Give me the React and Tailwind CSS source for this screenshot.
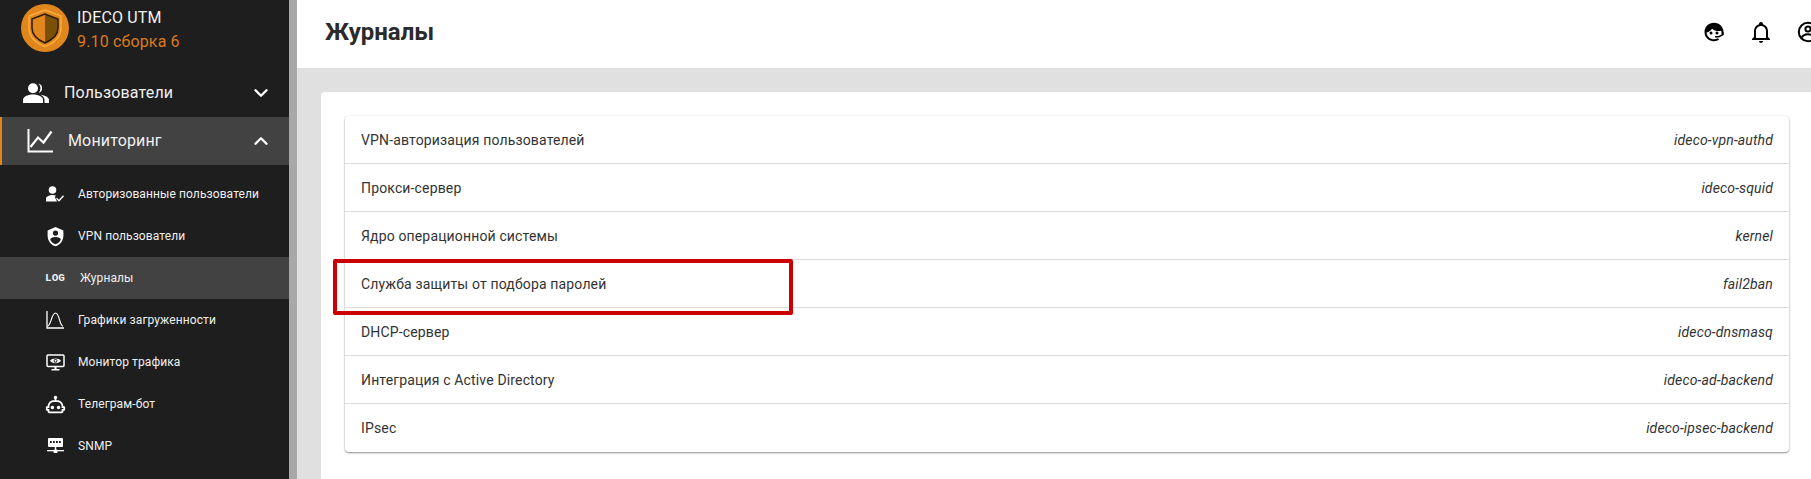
import { ChevronDown, ChevronUp } from "lucide-react";

const PATHS = {
  shieldAccount:
    "M12,1L3,5V11C3,16.55 6.84,21.74 12,23C17.16,21.74 21,16.55 21,11V5L12,1M12,5A3,3 0 0,1 15,8A3,3 0 0,1 12,11A3,3 0 0,1 9,8A3,3 0 0,1 12,5M17.13,17C15.92,18.85 14.11,20.24 12,20.92C9.89,20.24 8.08,18.85 6.87,17C6.53,16.5 6.24,16 6,15.47C6,13.82 8.71,12.47 12,12.47C15.29,12.47 18,13.79 18,15.47C17.76,16 17.47,16.5 17.13,17Z",
  robot:
    "M17.5 15.5C17.5 16.61 16.61 17.5 15.5 17.5S13.5 16.61 13.5 15.5 14.4 13.5 15.5 13.5 17.5 14.4 17.5 15.5M8.5 13.5C7.4 13.5 6.5 14.4 6.5 15.5S7.4 17.5 8.5 17.5 10.5 16.61 10.5 15.5 9.61 13.5 8.5 13.5M23 15V18C23 18.55 22.55 19 22 19H21V20C21 21.11 20.11 22 19 22H5C3.9 22 3 21.11 3 20V19H2C1.45 19 1 18.55 1 18V15C1 14.45 1.45 14 2 14H3C3 10.13 6.13 7 10 7H11V5.73C10.4 5.39 10 4.74 10 4C10 2.9 10.9 2 12 2S14 2.9 14 4C14 4.74 13.6 5.39 13 5.73V7H14C17.87 7 21 10.13 21 14H22C22.55 14 23 14.45 23 15M21 16H19V14C19 11.24 16.76 9 14 9H10C7.24 9 5 11.24 5 14V16H3V17H5V20H19V17H21V16Z",
  bell:
    "M10 21H14C14 22.1 13.1 23 12 23S10 22.1 10 21M21 19V20H3V19L5 17V11C5 7.9 7 5.2 10 4.3V4C10 2.9 10.9 2 12 2S14 2.9 14 4V4.3C17 5.2 19 7.9 19 11V17L21 19M17 11C17 8.2 14.8 6 12 6S7 8.2 7 11V18H17V11Z",
};

function Logo() {
  return (
    <svg width="48" height="48" viewBox="0 0 48 48" className="shrink-0">
      <circle cx="24" cy="24" r="24" fill="#e0861c" />
      <path d="M24 6 L40 12 V24 C40 33 33 39 24 42.5 C15 39 8 33 8 24 V12 Z" fill="none" stroke="#f7ad3e" strokeWidth="1.6" />
      <path d="M24 10 L37 15 V24 C37 31 31 36 24 39 Z" fill="#7a4f06" />
      <path d="M24 10 L11 15 V24 C11 31 17 36 24 39 C31 36 37 31 37 24 V15 Z" fill="none" stroke="#2c1c05" strokeWidth="1.5" />
    </svg>
  );
}

function PeopleIcon() {
  return (
    <svg width="26" height="20" viewBox="0 0 26 20" fill="white" className="shrink-0">
      <circle cx="10" cy="5.2" r="5" />
      <path d="M0 20 V16.8 C0 13.4 6 11.6 10 11.6 S20 13.4 20 16.8 V20 Z" />
      <path d="M15.5 .4 A5 5 0 0 1 15.5 10 A7 7 0 0 0 15.5 .4 Z" />
      <path d="M17.5 11.8 C22 12.4 26 14.2 26 17 V20 H21.5 V16.8 C21.5 15 20 13.2 17.5 11.8 Z" />
    </svg>
  );
}

function ChartIcon() {
  return (
    <svg width="26" height="24" viewBox="0 0 26 24" fill="none" stroke="white" strokeWidth="2" className="shrink-0">
      <path d="M1.5 0 V22.6 H26" />
      <path d="M3.5 18 L11 8.5 L16.5 13.5 L24.5 2.5" strokeWidth="2.2" />
    </svg>
  );
}

function AuthIcon() {
  return (
    <svg width="18" height="16" viewBox="0 0 18 16" fill="white">
      <circle cx="6.5" cy="4" r="3.8" />
      <path d="M0 15.5 V12.6 C0 10.2 4 9 6.5 9 C7.8 9 9 9.2 10 9.6 L8.8 11 L11 15.5 Z" />
      <path d="M10.5 12.3 L13 14.8 L17.5 9.8" fill="none" stroke="white" strokeWidth="1.4" />
    </svg>
  );
}

function GraphIcon() {
  return (
    <svg width="18" height="18" viewBox="0 0 18 18" fill="none" stroke="white" strokeWidth="1.2">
      <path d="M1 0 V17 H18" strokeWidth="1.3" />
      <path d="M1.5 15 C5 15 5.5 2 9.5 2 S13.5 15 17 15" />
    </svg>
  );
}

function MonitorIcon() {
  return (
    <svg width="19" height="17" viewBox="0 0 19 17" fill="none">
      <rect x="1" y="1" width="17" height="11.5" rx="1" stroke="white" strokeWidth="1.5" />
      <path d="M4 6.8 C6 3.6 13 3.6 15 6.8 C13 10 6 10 4 6.8 Z" fill="white" />
      <circle cx="9.5" cy="6.8" r="1.9" fill="#1e1e1e" />
      <circle cx="9.5" cy="6.8" r="1" fill="white" />
      <path d="M8.5 13 V15 H5.5 V16.5 H13.5 V15 H10.5 V13 Z" fill="white" />
    </svg>
  );
}

function ServerIcon() {
  return (
    <svg width="17" height="16" viewBox="0 0 17 16" fill="white">
      <rect x="1" y="0" width="15" height="9" rx="1" />
      <rect x="3" y="3" width="1.8" height="2" fill="#1e1e1e" />
      <rect x="6" y="3" width="1.8" height="2" fill="#1e1e1e" />
      <rect x="9" y="3" width="1.8" height="2" fill="#1e1e1e" />
      <rect x="12" y="3" width="1.8" height="2" fill="#1e1e1e" />
      <rect x="7.8" y="9" width="1.4" height="4" />
      <rect x="0" y="12" width="17" height="1.3" />
      <rect x="6.5" y="11.5" width="4" height="3.5" rx="1" />
    </svg>
  );
}

function MdiIcon({ d, size = 20, color = "white" }) {
  return (
    <svg width={size} height={size} viewBox="0 0 24 24" fill={color}>
      <path d={d} />
    </svg>
  );
}

function FaceIcon() {
  return (
    <svg width="24" height="24" viewBox="0 0 24 24" className="shrink-0">
      <path d="M12 2.8 C6.6 2.8 2.5 7 2.5 12 C2.5 17.2 6.6 21.2 12 21.2 C14 21.2 15.8 20.6 17.2 19.6 L15.8 18.2 C14.7 18.9 13.4 19.3 12 19.3 C8 19.3 4.8 16.2 4.6 12.4 C7 12 9 10.4 10 8.4 C12 10.6 15.4 11.4 19.2 10.8 C19.3 11.2 19.4 11.6 19.4 12 H21.5 C21.5 7 17.4 2.8 12 2.8 Z" fill="black" />
      <circle cx="9" cy="13" r="1.5" fill="black" />
      <circle cx="15" cy="13" r="1.5" fill="black" />
      <path d="M19.5 12 H21.8 V15 L17 17.6 H13 V16 H16.5 L19.5 14.4 Z" fill="black" />
    </svg>
  );
}

function AccountIcon() {
  return (
    <svg width="24" height="24" viewBox="0 0 24 24" fill="none" stroke="black" strokeWidth="2" className="shrink-0">
      <circle cx="12" cy="12" r="9.2" />
      <circle cx="12" cy="9" r="2.6" />
      <path d="M5.8 17.5 C7 15.2 10 14.3 12 14.3 S17 15.2 18.2 17.5" />
    </svg>
  );
}

const subItems = [
  { label: "Авторизованные пользователи", icon: <AuthIcon /> },
  { label: "VPN пользователи", icon: <MdiIcon d={PATHS.shieldAccount} size={21} /> },
  { label: "Журналы", log: true },
  { label: "Графики загруженности", icon: <GraphIcon /> },
  { label: "Монитор трафика", icon: <MonitorIcon /> },
  { label: "Телеграм-бот", icon: <MdiIcon d={PATHS.robot} size={21} /> },
  { label: "SNMP", icon: <ServerIcon /> },
];

const journals = [
  ["VPN-авторизация пользователей", "ideco-vpn-authd"],
  ["Прокси-сервер", "ideco-squid"],
  ["Ядро операционной системы", "kernel"],
  ["Служба защиты от подбора паролей", "fail2ban"],
  ["DHCP-сервер", "ideco-dnsmasq"],
  ["Интеграция с Active Directory", "ideco-ad-backend"],
  ["IPsec", "ideco-ipsec-backend"],
];

export default function App() {
  return (
    <div className="flex h-[479px] w-[1811px] overflow-hidden bg-white font-['Roboto',sans-serif]">
      {/* SIDEBAR */}
      <aside className="flex w-[289px] shrink-0 flex-col bg-[#1e1e1e] text-white">
        <div className="flex h-[68px] items-start gap-2 pl-[21px] pt-1">
          <Logo />
          <div className="pt-[2px] text-[16px] leading-[24px] tracking-[0.15px]">
            <div className="text-[#f2f2f2]">IDECO UTM</div>
            <div className="text-[#d97a1c]">9.10 сборка 6</div>
          </div>
        </div>

        <div className="flex h-[49px] items-center pl-[23px] pr-4">
          <PeopleIcon />
          <span className="ml-[15px] flex-1 text-[16px] tracking-[0.15px] text-[#f0f0f0]">Пользователи</span>
          <ChevronDown size={22} strokeWidth={2.6} className="mr-px" />
        </div>

        <div className="flex h-[48px] items-center border-l-2 border-[#e0861c] bg-[#424242] pl-[25px] pr-4">
          <ChartIcon />
          <span className="ml-[15px] flex-1 text-[16px] tracking-[0.15px] text-[#f0f0f0]">Мониторинг</span>
          <ChevronUp size={22} strokeWidth={2.6} className="mr-px" />
        </div>

        <nav className="pt-2">
          {subItems.map((item) => (
            <div
              key={item.label}
              className={`flex h-[42px] items-center text-[12px] tracking-[0.1px] text-[#f0f0f0] ${item.log ? "bg-[#424242]" : ""}`}
            >
              <span className="flex w-[78px] shrink-0 justify-center pl-[32px]">
                {item.log ? (
                  <span className="font-['Liberation_Mono',monospace] text-[11px] font-bold">LOG</span>
                ) : (
                  item.icon
                )}
              </span>
              <span className={item.log ? "ml-[2px]" : ""}>{item.label}</span>
            </div>
          ))}
        </nav>
      </aside>

      <div className="w-2 shrink-0 bg-[#a8a8a8]" />

      {/* MAIN */}
      <main className="flex min-w-0 flex-1 flex-col">
        <header className="flex h-[68px] shrink-0 items-center justify-between overflow-hidden pb-1 pl-[28px]">
          <h1 className="text-[24px] font-bold text-[#2b2b2b]">Журналы</h1>
          <div className="mr-[-9px] flex items-center gap-[23px]">
            <FaceIcon />
            <MdiIcon d={PATHS.bell} size={24} color="black" />
            <AccountIcon />
          </div>
        </header>

        <div className="flex-1 bg-[#e0e0e0] pl-6 pt-6">
          <div className="h-full rounded-tl-[4px] bg-white pl-6 pr-[22px] pt-6">
            <div className="rounded-[4px] bg-white shadow-[0_1px_2px_rgba(0,0,0,0.45),0_0_2px_rgba(0,0,0,0.08)]">
              {journals.map(([name, unit], i) => (
                <div
                  key={unit}
                  className={`relative flex h-[48px] items-center justify-between px-4 pt-px text-[14px] tracking-[0.15px] text-[#333333] ${
                    i < journals.length - 1 ? "border-b border-[#dddddd]" : ""
                  }`}
                >
                  <span>{name}</span>
                  <span className="italic">{unit}</span>
                  {unit === "fail2ban" && (
                    <div className="absolute left-[-12px] top-[-1px] h-[56px] w-[460px] rounded-[2px] border-4 border-[#cc0000]" />
                  )}
                </div>
              ))}
            </div>
          </div>
        </div>
      </main>
    </div>
  );
}
